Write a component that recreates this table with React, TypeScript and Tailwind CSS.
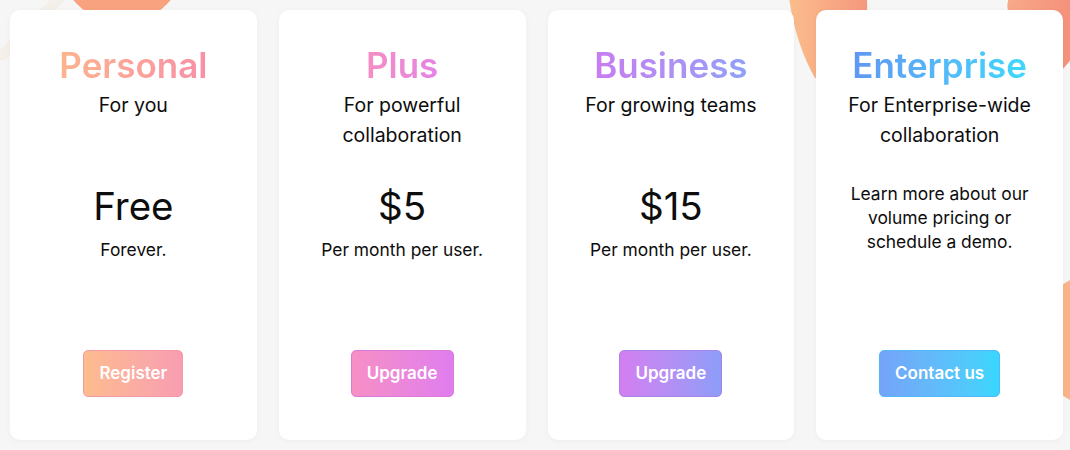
import React from "react";

interface PlanType {
  name: string;
  tagline: string;
  price?: string;
  period?: string;
  note?: string;
  cta: string;
  titleClass: string;
  buttonClass: string;
}

const plans: Array<PlanType> = [
  {
    name: "Personal",
    tagline: "For you",
    price: "Free",
    period: "Forever.",
    cta: "Register",
    titleClass: "from-[#fcb48c] to-[#f98fa6]",
    buttonClass: "from-[#fdbc8e] to-[#f89db2] border-[#f49aa6]",
  },
  {
    name: "Plus",
    tagline: "For powerful collaboration",
    price: "$5",
    period: "Per month per user.",
    cta: "Upgrade",
    titleClass: "from-[#f68ec2] to-[#e483e6]",
    buttonClass: "from-[#f78fc4] to-[#e07def] border-[#d97ad6]",
  },
  {
    name: "Business",
    tagline: "For growing teams",
    price: "$15",
    period: "Per month per user.",
    cta: "Upgrade",
    titleClass: "from-[#c77cf1] to-[#8fa1f7]",
    buttonClass: "from-[#d37ef1] to-[#8c9df8] border-[#a584ea]",
  },
  {
    name: "Enterprise",
    tagline: "For Enterprise-wide collaboration",
    note: "Learn more about our volume pricing or schedule a demo.",
    cta: "Contact us",
    titleClass: "from-[#5f97f3] to-[#3dd8fb]",
    buttonClass: "from-[#74a3f8] to-[#38d6fc] border-[#4fb8f8]",
  },
];

const Card = ({ plan }: { plan: PlanType }) => {
  return (
    <div className="flex-1 h-[430px] bg-white rounded-[10px] shadow-[0_1px_6px_rgba(0,0,0,0.04)] flex flex-col items-center text-center pt-[35px] pb-[43px] px-5 text-[#0d0d0d]">
      <h2
        className={`text-[35px] leading-[40px] font-semibold bg-linear-to-r bg-clip-text text-transparent ${plan.titleClass}`}
      >
        {plan.name}
      </h2>
      <p className="mt-[5px] h-[60px] text-[19.5px] leading-[30px]">{plan.tagline}</p>
      <div className="mt-[32px] flex flex-col items-center">
        {plan.price ? (
          <>
            <div className="text-[38.5px] leading-[48px]">{plan.price}</div>
            <div className="mt-2 text-[17.4px] leading-[24px]">{plan.period}</div>
          </>
        ) : (
          <p className="text-[17.4px] leading-[24px] px-2">{plan.note}</p>
        )}
      </div>
      <button
        className={`mt-auto h-[47px] px-[15px] rounded-[5px] border bg-linear-to-r text-white text-[17px] font-semibold ${plan.buttonClass}`}
      >
        {plan.cta}
      </button>
    </div>
  );
};

export default function App() {
  return (
    <div
      className="relative w-[1070px] h-[450px] overflow-hidden bg-[#f6f6f6]"
      style={{ fontFamily: "Inter, 'Noto Sans', sans-serif" }}
    >
      {/* background blobs */}
      <svg className="absolute inset-0" width="1070" height="450" viewBox="0 0 1070 450">
        <defs>
          <linearGradient id="peach" x1="0" y1="0" x2="1" y2="0">
            <stop offset="0" stopColor="#fbbd8c" />
            <stop offset="1" stopColor="#f6977d" />
          </linearGradient>
          <linearGradient id="salmon" x1="0" y1="0" x2="1" y2="0">
            <stop offset="0" stopColor="#f8a98a" />
            <stop offset="1" stopColor="#f48f79" />
          </linearGradient>
        </defs>
        <path d="M-10 60 L60 -10 L75 -10 L5 60 Z" fill="#f3ece4" opacity="0.7" />
        <circle cx="122" cy="-40" r="63" fill="#f8a27f" />
        <path d="M789 -2 Q796 45 815 78 L868 78 L867 -2 Z" fill="url(#peach)" />
        <path d="M1009 -2 Q1000 20 1040 50 L1062 70 L1075 55 L1075 -2 Z" fill="url(#salmon)" />
        <circle cx="1102" cy="340" r="68" fill="url(#peach)" />
      </svg>
      <div className="relative flex gap-[22px] pl-[10px] pr-[7px] pt-[10px]">
        {plans.map((plan) => (
          <Card plan={plan} key={plan.name} />
        ))}
      </div>
    </div>
  );
}
